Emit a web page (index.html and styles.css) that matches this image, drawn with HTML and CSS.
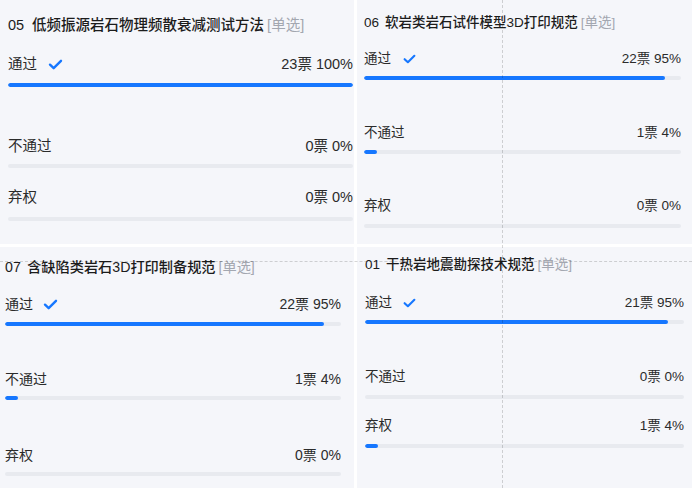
FILE: index.html
```html
<!DOCTYPE html>
<html lang="zh">
<head>
<meta charset="utf-8">
<title>投票结果</title>
<link rel="stylesheet" href="styles.css">
</head>
<body>
<div class="sheet">
  <section class="panel p-tl">
    <h2 class="title"><span class="num">05</span>低频振源岩石物理频散衰减测试方法<span class="tag">[单选]</span></h2>
    <div class="opt">
      <div class="head"><span class="label">通过<svg class="check" viewBox="0 0 16 12"><path d="M2 6.2 L6 10 L14 2" /></svg></span><span class="count">23票 100%</span></div>
      <div class="track"><div class="fill" style="width:100%"></div></div>
    </div>
    <div class="opt">
      <div class="head"><span class="label">不通过</span><span class="count">0票 0%</span></div>
      <div class="track"><div class="fill" style="width:0%"></div></div>
    </div>
    <div class="opt">
      <div class="head"><span class="label">弃权</span><span class="count">0票 0%</span></div>
      <div class="track"><div class="fill" style="width:0%"></div></div>
    </div>
  </section>

  <section class="panel p-tr">
    <h2 class="title"><span class="num">06</span>软岩类岩石试件模型3D打印规范<span class="tag">[单选]</span></h2>
    <div class="opt">
      <div class="head"><span class="label">通过<svg class="check" viewBox="0 0 16 12"><path d="M2 6.2 L6 10 L14 2" /></svg></span><span class="count">22票 95%</span></div>
      <div class="track"><div class="fill" style="width:95%"></div></div>
    </div>
    <div class="opt">
      <div class="head"><span class="label">不通过</span><span class="count">1票 4%</span></div>
      <div class="track"><div class="fill" style="width:4%"></div></div>
    </div>
    <div class="opt">
      <div class="head"><span class="label">弃权</span><span class="count">0票 0%</span></div>
      <div class="track"><div class="fill" style="width:0%"></div></div>
    </div>
  </section>

  <section class="panel p-bl">
    <h2 class="title"><span class="num">07</span>含缺陷类岩石3D打印制备规范<span class="tag">[单选]</span></h2>
    <div class="opt">
      <div class="head"><span class="label">通过<svg class="check" viewBox="0 0 16 12"><path d="M2 6.2 L6 10 L14 2" /></svg></span><span class="count">22票 95%</span></div>
      <div class="track"><div class="fill" style="width:95%"></div></div>
    </div>
    <div class="opt">
      <div class="head"><span class="label">不通过</span><span class="count">1票 4%</span></div>
      <div class="track"><div class="fill" style="width:4%"></div></div>
    </div>
    <div class="opt">
      <div class="head"><span class="label">弃权</span><span class="count">0票 0%</span></div>
      <div class="track"><div class="fill" style="width:0%"></div></div>
    </div>
  </section>

  <section class="panel p-br">
    <h2 class="title"><span class="num">01</span>干热岩地震勘探技术规范<span class="tag">[单选]</span></h2>
    <div class="opt">
      <div class="head"><span class="label">通过<svg class="check" viewBox="0 0 16 12"><path d="M2 6.2 L6 10 L14 2" /></svg></span><span class="count">21票 95%</span></div>
      <div class="track"><div class="fill" style="width:95%"></div></div>
    </div>
    <div class="opt">
      <div class="head"><span class="label">不通过</span><span class="count">0票 0%</span></div>
      <div class="track"><div class="fill" style="width:0%"></div></div>
    </div>
    <div class="opt">
      <div class="head"><span class="label">弃权</span><span class="count">1票 4%</span></div>
      <div class="track"><div class="fill" style="width:4%"></div></div>
    </div>
  </section>

  <div class="guide guide-v"></div>
  <div class="guide guide-h"></div>
</div>
</body>
</html>
```

FILE: styles.css
```css
* { box-sizing: border-box; }

html, body {
  margin: 0;
  padding: 0;
  background: #ffffff;
}

body {
  font-family: "Liberation Sans", "Noto Sans CJK SC", sans-serif;
  color: #262626;
}

.sheet {
  position: relative;
  width: 692px;
  height: 488px;
  display: grid;
  grid-template-columns: 354px 335px;
  grid-template-rows: 244px 241px;
  gap: 3px;
  overflow: hidden;
}

.panel {
  background: #f5f6fa;
  display: flex;
  flex-direction: column;
}

.title {
  margin: 0;
  font-weight: 500;
  color: #1c1c1c;
  white-space: nowrap;
}

.num { margin-right: 0.45em; }

.tag {
  font-weight: 400;
  color: #a3a7b0;
  margin-left: 3px;
}

.head {
  display: flex;
  justify-content: space-between;
  align-items: center;
  color: #2b2b2b;
}

.label {
  display: flex;
  align-items: center;
}

.check {
  width: 15px;
  height: 11px;
  fill: none;
  stroke: #1677ff;
  stroke-width: 2.6;
  stroke-linecap: round;
  stroke-linejoin: round;
}

.track {
  height: 4px;
  border-radius: 2px;
  background: #e8eaef;
  overflow: hidden;
}

.fill {
  height: 100%;
  border-radius: 2px;
  background: #1677ff;
}

/* Top-left */
.p-tl { padding: 15px 1px 0 8px; }
.p-tl .title { font-size: 14.5px; line-height: 20px; }
.p-tl .num { margin-right: 0.55em; }
.p-tl .head { font-size: 14.5px; line-height: 20px; }
.p-tl .check { margin-left: 11px; }
.p-tl .opt:nth-of-type(1) { margin-top: 19px; }
.p-tl .opt:nth-of-type(1) .track { margin-top: 9px; }
.p-tl .opt:nth-of-type(2) { margin-top: 49px; }
.p-tl .opt:nth-of-type(2) .track { margin-top: 8px; }
.p-tl .opt:nth-of-type(3) { margin-top: 19px; }
.p-tl .opt:nth-of-type(3) .track { margin-top: 10px; }

/* Top-right */
.p-tr { padding: 14px 11px 0 7px; }
.p-tr .title { font-size: 13.5px; line-height: 18px; }
.p-tr .head { font-size: 13.5px; line-height: 18px; }
.p-tr .check { margin-left: 12px; width: 13px; height: 10px; }
.p-tr .opt:nth-of-type(1) { margin-top: 18px; }
.p-tr .opt:nth-of-type(1) .track { margin-top: 8px; }
.p-tr .opt:nth-of-type(2) { margin-top: 44px; }
.p-tr .opt:nth-of-type(2) .track { margin-top: 8px; }
.p-tr .opt:nth-of-type(3) { margin-top: 43px; }
.p-tr .opt:nth-of-type(3) .track { margin-top: 9px; }

/* Bottom-left */
.p-bl { padding: 10px 13px 0 5px; }
.p-bl .title { font-size: 14.2px; line-height: 20px; }
.p-bl .head { font-size: 14px; line-height: 20px; }
.p-bl .check { margin-left: 10px; }
.p-bl .opt:nth-of-type(1) { margin-top: 17px; }
.p-bl .opt:nth-of-type(1) .track { margin-top: 8px; }
.p-bl .opt:nth-of-type(2) { margin-top: 43px; }
.p-bl .opt:nth-of-type(2) .track { margin-top: 7px; }
.p-bl .opt:nth-of-type(3) { margin-top: 45px; }
.p-bl .opt:nth-of-type(3) .track { margin-top: 7px; }

/* Bottom-right */
.p-br { padding: 9px 8px 0 8px; }
.p-br .title { font-size: 13.5px; line-height: 18px; }
.p-br .head { font-size: 13.5px; line-height: 18px; }
.p-br .check { margin-left: 11px; width: 13px; height: 10px; }
.p-br .opt:nth-of-type(1) { margin-top: 20px; }
.p-br .opt:nth-of-type(1) .track { margin-top: 8px; }
.p-br .opt:nth-of-type(2) { margin-top: 44px; }
.p-br .opt:nth-of-type(2) .track { margin-top: 9px; }
.p-br .opt:nth-of-type(3) { margin-top: 18px; }
.p-br .opt:nth-of-type(3) .track { margin-top: 9px; }

/* faint dashed guide lines lying over the collage */
.guide {
  position: absolute;
  pointer-events: none;
}
.guide-v {
  left: 502px;
  top: 0;
  bottom: 0;
  border-left: 1px dashed rgba(0, 0, 0, 0.16);
}
.guide-h {
  top: 261px;
  left: 0;
  right: 0;
  border-top: 1px dashed rgba(0, 0, 0, 0.16);
}
```
